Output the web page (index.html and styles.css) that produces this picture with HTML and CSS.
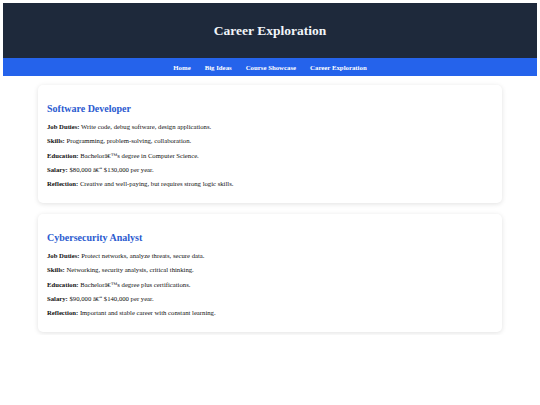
FILE: index.html
```html
<!DOCTYPE html>
<html lang="en">
<head>
<meta charset="utf-8">
<title>Career Exploration</title>
<link rel="stylesheet" href="styles.css">
</head>
<body>
<header class="site-header">
  <h1 class="site-title">Career Exploration</h1>
</header>
<nav class="site-nav">
  <a href="#">Home</a>
  <a href="#">Big Ideas</a>
  <a href="#">Course Showcase</a>
  <a href="#">Career Exploration</a>
</nav>
<main class="content">
  <section class="card">
    <h2 class="card-title">Software Developer</h2>
    <p><strong>Job Duties:</strong> Write code, debug software, design applications.</p>
    <p><strong>Skills:</strong> Programming, problem-solving, collaboration.</p>
    <p><strong>Education:</strong> Bachelorâ€™s degree in Computer Science.</p>
    <p><strong>Salary:</strong> $80,000 â€“ $130,000 per year.</p>
    <p><strong>Reflection:</strong> Creative and well-paying, but requires strong logic skills.</p>
  </section>
  <section class="card">
    <h2 class="card-title">Cybersecurity Analyst</h2>
    <p><strong>Job Duties:</strong> Protect networks, analyze threats, secure data.</p>
    <p><strong>Skills:</strong> Networking, security analysis, critical thinking.</p>
    <p><strong>Education:</strong> Bachelorâ€™s degree plus certifications.</p>
    <p><strong>Salary:</strong> $90,000 â€“ $140,000 per year.</p>
    <p><strong>Reflection:</strong> Important and stable career with constant learning.</p>
  </section>
</main>
</body>
</html>
```
FILE: styles.css
```css
html, body {
  margin: 0;
  padding: 0;
  background: #ffffff;
}
body {
  padding: 3px;
  font-family: "Liberation Serif", "Times New Roman", serif;
  color: #111;
}
.site-header {
  background: #1e293b;
  height: 55px;
  display: flex;
  align-items: center;
  justify-content: center;
}
.site-title {
  margin: 0;
  font-size: 13.5px;
  font-weight: bold;
  color: #f1f5f9;
}
.site-nav {
  background: #2563eb;
  height: 18px;
  display: flex;
  align-items: center;
  justify-content: center;
  gap: 14px;
}
.site-nav a {
  color: #ffffff;
  text-decoration: none;
  font-weight: bold;
  font-size: 6.8px;
}
.content {
  display: flex;
  flex-direction: column;
  align-items: center;
  gap: 11px;
  padding-top: 9px;
}
.card {
  width: 464px;
  box-sizing: border-box;
  background: #fff;
  border-radius: 5px;
  box-shadow: 0 1px 5px rgba(0, 0, 0, 0.12);
  padding: 15px 9px 15px;
}
.card-title {
  margin: 3px 0 9px;
  font-size: 10px;
  color: #2b5bd0;
}
.card p {
  margin: 0 0 6.3px;
  font-size: 6.7px;
  line-height: 8px;
}
.card p:last-child {
  margin-bottom: 0;
}
```
